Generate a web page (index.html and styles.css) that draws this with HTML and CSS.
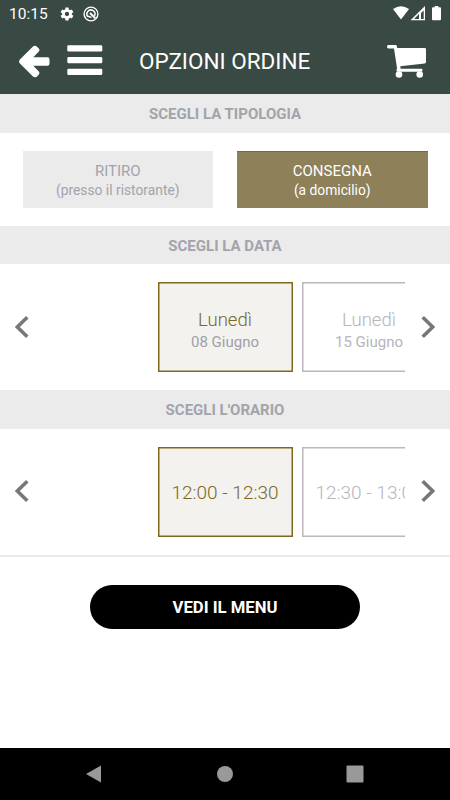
FILE: index.html
```html
<!DOCTYPE html>
<html lang="it">
<head>
<meta charset="utf-8">
<title>Opzioni ordine</title>
<link rel="stylesheet" href="styles.css">
</head>
<body>
<div class="screen">
  <header class="header">
    <div class="status">
      <span class="clock">10:15</span>
      <svg class="gear" width="14" height="14" viewBox="0 0 24 24"><path fill="#fff" fill-rule="evenodd" d="M20.3 13.2a8 8 0 0 0 0-2.4l2.7-2-2.7-4.6-3.1 1.2a8 8 0 0 0-2.1-1.2L14.6.8H9.4l-.5 3.4a8 8 0 0 0-2.1 1.2L3.7 4.2 1 8.8l2.7 2a8 8 0 0 0 0 2.4L1 15.200l2.700 4.600 3.100-1.200a8 8 0 0 0 2.100 1.200l.5 3.400h5.200l.5-3.400a8 8 0 0 0 2.100-1.200l3.100 1.200 2.700-4.600zM12 8.300a3.700 3.700 0 1 1 0 7.400 3.700 3.700 0 0 1 0-7.400z"/></svg>
      <svg class="sync" width="16" height="16" viewBox="0 0 16 16"><g fill="none" stroke="#fff"><circle cx="8" cy="8" r="6.900" stroke-width="1.400"/><path stroke-width="1.500" d="M5 10.800A4 4 0 1 1 11.500 9.800"/><path stroke-width="2" d="M7 7L12.300 12.300"/><path stroke-width="1.500" d="M4.800 10.300L8.500 11.400"/></g></svg>
      <svg class="signals" width="49" height="15" viewBox="0 0 49 15"><path fill="#fff" d="M0 3Q8-2.600 16 3L8 13.500z"/><path fill="#fff" fill-rule="evenodd" d="M17.500 14.300L32 0v14.300zM21 13h5V7.900zM28 13h2.700V4.500L28 7z"/><path fill="#fff" d="M39 2.200a1 1 0 0 1 1-1h1.700V0h3.600v1.200H47a1 1 0 0 1 1 1V13.300a1 1 0 0 1-1 1h-7a1 1 0 0 1-1-1z"/></svg>
    </div>
    <div class="toolbar">
      <svg class="back" width="31" height="33" viewBox="0 0 31 33"><path fill="#fff" d="M14 1.500L.9 14.500Q-.8 16.500 .9 18.500L14 31.500Q16 33.200 18 31.400L19.800 29.600Q21.200 28 19.600 26.300L14.300 20.800H28.500Q30.500 20.800 30.500 18.800V14.300Q30.500 12.300 28.500 12.300H14.300L19.600 6.800Q21.200 5.100 19.800 3.500L18 1.700Q16 -.1 14 1.500z"/></svg>
      <svg class="burger" width="36" height="31" viewBox="0 0 36 31"><g fill="#fff"><rect x=".3" y=".3" width="35" height="6.200" rx="1.300"/><rect x=".3" y="12.100" width="35" height="6.200" rx="1.300"/><rect x=".3" y="23.800" width="35" height="6.200" rx="1.300"/></g></svg>
      <h1 class="title">OPZIONI ORDINE</h1>
      <svg class="cart" width="39" height="33" viewBox="0 0 39 33"><g fill="#fff"><path d="M1.500 0H8.500Q9.700 0 9.900 1.200L10.200 3H37.700Q39 3 39 4.300V17Q39 18.200 37.700 18.400L13.300 21.300 13.600 23.800H34.500Q35.500 23.800 35.500 25.200T34.500 26.800H10.800Q9.500 26.800 9.500 25.300L10 23 7 3.500H1.500Q0 3.500 0 1.700T1.500 0z"/><circle cx="12" cy="29.500" r="3.300"/><circle cx="32.700" cy="29.500" r="3.300"/></g></svg>
    </div>
  </header>

  <h2 class="section">SCEGLI LA TIPOLOGIA</h2>
  <div class="types">
    <div class="type"><span class="type-name">RITIRO</span><span class="type-note">(presso il ristorante)</span></div>
    <div class="type type-on"><span class="type-name">CONSEGNA</span><span class="type-note">(a domicilio)</span></div>
  </div>

  <h2 class="section">SCEGLI LA DATA</h2>
  <div class="picker">
    <svg class="chevron" width="14" height="22" viewBox="0 0 14 22"><path d="M12.300 1.300L2.300 11 12.300 20.700"/></svg>
    <div class="strip">
      <div class="card card-on"><span class="card-main">Lunedì</span><span class="card-sub">08 Giugno</span></div>
      <div class="card"><span class="card-main">Lunedì</span><span class="card-sub">15 Giugno</span></div>
    </div>
    <svg class="chevron" width="14" height="22" viewBox="0 0 14 22"><path d="M1.700 1.300L11.700 11 1.700 20.700"/></svg>
  </div>

  <h2 class="section">SCEGLI L'ORARIO</h2>
  <div class="picker">
    <svg class="chevron" width="14" height="22" viewBox="0 0 14 22"><path d="M12.300 1.300L2.300 11 12.300 20.700"/></svg>
    <div class="strip">
      <div class="card card-on"><span class="card-main card-time">12:00 - 12:30</span></div>
      <div class="card"><span class="card-main card-time">12:30 - 13:00</span></div>
    </div>
    <svg class="chevron" width="14" height="22" viewBox="0 0 14 22"><path d="M1.700 1.300L11.700 11 1.700 20.700"/></svg>
  </div>

  <div class="footer">
    <button class="menu-button">VEDI IL MENU</button>
  </div>

  <nav class="navbar">
    <svg width="18" height="18" viewBox="0 0 18 18"><path d="M1 9L16 .5V17.500z"/></svg>
    <svg width="18" height="18" viewBox="0 0 18 18"><circle cx="9" cy="9" r="8"/></svg>
    <svg width="18" height="18" viewBox="0 0 18 18"><rect x=".5" y=".6" width="17" height="16.800" rx="1"/></svg>
  </nav>
</div>
</body>
</html>
```

FILE: styles.css
```css
* {
  box-sizing: border-box;
}

body {
  margin: 0;
  background: #fff;
  font-family: Roboto, "Liberation Sans", sans-serif;
  color: #a3a3ab;
}

svg {
  display: block;
  flex: none;
}

.screen {
  display: flex;
  flex-direction: column;
  width: 450px;
  height: 800px;
  overflow: hidden;
}

.header {
  flex: none;
  height: 94.4px;
  background: #384a43;
  color: #fff;
}

.status {
  display: flex;
  align-items: center;
  height: 27px;
  padding: 0 8px 0 9px;
}

.clock {
  width: 51px;
  padding-top: 1px;
  font-size: 15.5px;
  line-height: 27px;
}

.sync {
  margin-left: 9px;
}

.signals {
  margin-left: auto;
}

.toolbar {
  display: flex;
  align-items: center;
  height: 68px;
  padding: 0 24px 0 19px;
}

.burger {
  margin-left: 17px;
  margin-top: -1px;
}

.title {
  margin: 0 0 0 36px;
  font-size: 22.5px;
  font-weight: 400;
  line-height: 30px;
  white-space: nowrap;
}

.cart {
  margin-left: auto;
}

.section {
  flex: none;
  height: 38.5px;
  margin: 0;
  background: #ebebeb;
  font-size: 15px;
  font-weight: 700;
  line-height: 41px;
  text-align: center;
}

.types {
  display: flex;
  flex: none;
  gap: 24px;
  height: 93px;
  padding: 18px 22.5px;
}

.type {
  display: flex;
  flex: 1;
  flex-direction: column;
  align-items: center;
  padding-top: 10px;
  background: #ebebeb;
}

.type-on {
  background: #8e8059;
  border-top: 1px solid #7d6a26;
  padding-top: 9px;
  color: #fff;
}

.type-name {
  font-size: 15px;
  line-height: 20px;
}

.type-note {
  font-size: 13.8px;
  line-height: 19px;
}

.picker {
  display: flex;
  flex: none;
  align-items: center;
  justify-content: space-between;
  height: 126px;
  padding: 0 15px;
}

.chevron {
  fill: none;
  stroke: #777;
  stroke-width: 3.6;
  margin-top: -1px;
}

.strip {
  display: flex;
  gap: 9px;
  width: 360px;
  padding-left: 112.5px;
  overflow: hidden;
}

.card {
  display: flex;
  flex: none;
  flex-direction: column;
  align-items: center;
  justify-content: center;
  width: 135px;
  height: 90px;
  border: 1px solid #b8b8bd;
  box-shadow: inset 0 0 0 0.5px #b8b8bd;
  color: #b5b5bc;
}

.card-on {
  background: #f3f2ef;
  border-color: #7d6a1e;
  box-shadow: inset 0 0 0 0.5px #7d6a1e;
  color: #a0a0a8;
}

.card-main {
  padding-top: 5px;
  font-size: 18.6px;
  font-weight: 300;
  line-height: 24px;
  white-space: nowrap;
}

.card-on .card-main {
  color: #7a6724;
}

.card-time {
  padding-top: 2px;
  font-size: 19px;
}

.card-sub {
  font-size: 15px;
  line-height: 20px;
}

.footer {
  flex: 1;
  padding-top: 28px;
  border-top: 2px solid #ebebeb;
}

.menu-button {
  display: block;
  width: 270px;
  height: 44.5px;
  margin: 0 auto;
  padding: 2px 0 0;
  border: 0;
  border-radius: 23px;
  background: #000;
  color: #fff;
  font: 700 16.7px/20px Roboto, "Liberation Sans", sans-serif;
}

.navbar {
  display: flex;
  flex: none;
  align-items: center;
  justify-content: space-between;
  height: 52px;
  padding: 0 86px 0 85px;
  background: #000;
}

.navbar svg {
  fill: #999;
}
```
